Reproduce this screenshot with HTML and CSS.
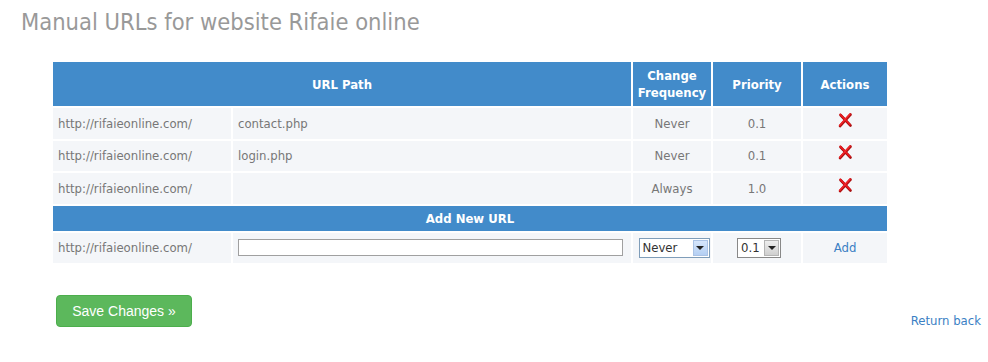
FILE: index.html
```html
<!DOCTYPE html>
<html>
<head>
<meta charset="utf-8">
<link rel="stylesheet" href="styles.css">
</head>
<body>
<h1 class="title">Manual URLs for website Rifaie online</h1>
<table class="urls">
  <colgroup>
    <col class="c-host"><col class="c-path"><col class="c-freq"><col class="c-prio"><col class="c-act">
  </colgroup>
  <thead>
    <tr>
      <th colspan="2">URL Path</th>
      <th>Change<br>Frequency</th>
      <th>Priority</th>
      <th>Actions</th>
    </tr>
  </thead>
  <tbody>
    <tr>
      <td>http://rifaieonline.com/</td><td>contact.php</td><td class="center">Never</td><td class="center">0.1</td>
      <td class="center"><svg class="del" width="16" height="16" viewBox="0 0 16 16"><path d="M3.5 3 L13.5 13.5" stroke="#a00c0c" stroke-width="2.6" stroke-linecap="round"/><path d="M13.5 2.5 L3 14" stroke="#b00e0e" stroke-width="2.6" stroke-linecap="round"/><path d="M3.2 2.4 L13 12.6" stroke="#ec1a1f" stroke-width="1.6" stroke-linecap="round"/><path d="M13 2 L2.8 13.2" stroke="#f2262b" stroke-width="1.6" stroke-linecap="round"/></svg></td>
    </tr>
    <tr>
      <td>http://rifaieonline.com/</td><td>login.php</td><td class="center">Never</td><td class="center">0.1</td>
      <td class="center"><svg class="del" width="16" height="16" viewBox="0 0 16 16"><path d="M3.5 3 L13.5 13.5" stroke="#a00c0c" stroke-width="2.6" stroke-linecap="round"/><path d="M13.5 2.5 L3 14" stroke="#b00e0e" stroke-width="2.6" stroke-linecap="round"/><path d="M3.2 2.4 L13 12.6" stroke="#ec1a1f" stroke-width="1.6" stroke-linecap="round"/><path d="M13 2 L2.8 13.2" stroke="#f2262b" stroke-width="1.6" stroke-linecap="round"/></svg></td>
    </tr>
    <tr>
      <td>http://rifaieonline.com/</td><td></td><td class="center">Always</td><td class="center">1.0</td>
      <td class="center"><svg class="del" width="16" height="16" viewBox="0 0 16 16"><path d="M3.5 3 L13.5 13.5" stroke="#a00c0c" stroke-width="2.6" stroke-linecap="round"/><path d="M13.5 2.5 L3 14" stroke="#b00e0e" stroke-width="2.6" stroke-linecap="round"/><path d="M3.2 2.4 L13 12.6" stroke="#ec1a1f" stroke-width="1.6" stroke-linecap="round"/><path d="M13 2 L2.8 13.2" stroke="#f2262b" stroke-width="1.6" stroke-linecap="round"/></svg></td>
    </tr>
    <tr class="addhead">
      <th colspan="5">Add New URL</th>
    </tr>
    <tr>
      <td>http://rifaieonline.com/</td>
      <td><span class="textbox"></span></td>
      <td class="center"><span class="sel sel-freq"><span class="sel-text">Never</span><span class="sel-btn blue"><span class="tri"></span></span></span></td>
      <td class="center"><span class="sel sel-prio"><span class="sel-text">0.1</span><span class="sel-btn gray"><span class="tri"></span></span></span></td>
      <td class="center"><a class="link" href="#">Add</a></td>
    </tr>
  </tbody>
</table>
<div class="footer">
  <button class="save">Save Changes &raquo;</button>
  <a class="link back" href="#">Return back</a>
</div>
</body>
</html>
```

FILE: styles.css
```css
body {
  margin: 0;
  padding: 0;
  background: #fff;
  font-family: "DejaVu Sans Condensed", "DejaVu Sans", sans-serif;
  font-size: 13px;
  color: #777;
}
.title {
  margin: 0;
  padding: 8px 0 0 21px;
  height: 41px;
  box-sizing: border-box;
  font-weight: normal;
  font-size: 23.5px;
  color: #999;
  line-height: 28px;
}
.urls {
  margin: 19px 0 0 51px;
  border-collapse: separate;
  border-spacing: 2px;
  width: 837px;
  table-layout: fixed;
}
.c-host { width: 178px; }
.c-path { width: 398px; }
.c-freq { width: 78px; }
.c-prio { width: 88px; }
.c-act { width: 84px; }
.urls th {
  background: #428bca;
  color: #fff;
  font-weight: bold;
  font-size: 13px;
  height: 44px;
  padding: 0;
  line-height: 17px;
}
.urls .addhead th {
  height: 25px;
}
.urls td {
  background: #f4f6f9;
  height: 30.5px;
  padding: 0 0 0 5px;
  color: #777;
  vertical-align: middle;
}
.urls td.center {
  text-align: center;
  padding: 0;
}
.del {
  display: inline-block;
  vertical-align: middle;
  margin-top: -9px;
}
.textbox {
  display: block;
  width: 383px;
  height: 15px;
  border: 1px solid #a0a0a0;
  background: #fff;
}
.sel {
  display: inline-flex;
  align-items: stretch;
  background: #fff;
  border: 1px solid #7f9db9;
  height: 18px;
  box-sizing: content-box;
  vertical-align: middle;
  text-align: left;
}
.sel-freq { width: 69px; margin-left: 4px; }
.sel-prio { width: 42px; border-color: #888; margin-left: 4px; }
.sel-text {
  flex: 1;
  color: #333;
  font-size: 13px;
  line-height: 18px;
  padding-left: 3px;
}
.sel-btn {
  width: 15px;
  margin: 1px;
  box-sizing: border-box;
  display: flex;
  align-items: center;
  justify-content: center;
}
.sel-btn.blue {
  background: linear-gradient(#d6e6fb, #b4cff3);
  border: 1px solid #aac3e6;
}
.sel-btn.gray {
  background: linear-gradient(#eee, #cfcfcf);
  border: 1px solid #b5b5b5;
}
.tri {
  width: 0;
  height: 0;
  border-left: 4px solid transparent;
  border-right: 4px solid transparent;
  border-top: 4px solid #222;
}
.link {
  color: #3b7fc4;
  text-decoration: none;
  font-size: 13px;
}
.footer {
  display: flex;
  justify-content: space-between;
  align-items: flex-end;
  padding: 30px 7px 0 56px;
}
.save {
  width: 136px;
  height: 32px;
  background: #5cb85c;
  border: 1px solid #4cae4c;
  border-radius: 4px;
  color: #fff;
  font-family: "Liberation Sans", Arial, sans-serif;
  font-size: 14px;
  padding: 0;
  cursor: pointer;
}
.back {
  margin-bottom: -1px;
}
```
